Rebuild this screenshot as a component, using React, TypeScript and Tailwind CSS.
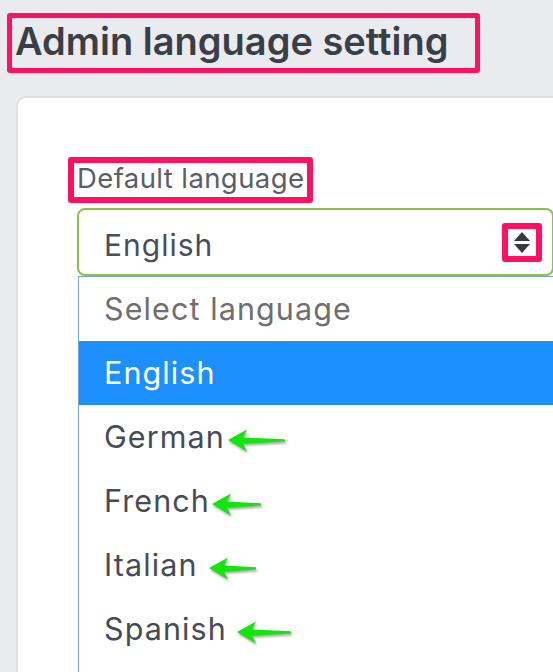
import React from "react";

function Arrow({ w }: { w: number }) {
  return (
    <svg
      width={w}
      height={26}
      viewBox={`0 0 ${w} 26`}
      className="drop-shadow-[1px_2px_1px_rgba(0,0,0,0.35)]"
    >
      <path
        d={`M1 12 L20 1.5 L16 9.5 L${w - 2} 11.3 L${w - 2} 13.5 L16 15.8 L20 23.5 Z`}
        fill="#11e60a"
      />
    </svg>
  );
}

const opts: { label: string; arrow: number; gap: number }[] = [
  { label: "German", arrow: 60, gap: 2 },
  { label: "French", arrow: 52, gap: 1 },
  { label: "Italian", arrow: 50, gap: 10 },
  { label: "Spanish", arrow: 57, gap: 9 },
];

export default function App() {
  return (
    <div
      className="h-[672px] w-[553px] overflow-hidden bg-[#eaebef]"
      style={{ fontFamily: "Inter, 'Noto Sans', sans-serif" }}
    >
      <div className="pl-[7px] pt-[13px]">
        <div className="flex h-[60px] w-[473px] items-center rounded-[3px] border-[5px] border-[#ff1160] pl-[3px]">
          <h1 className="-mt-[5px] text-[38px] leading-none font-semibold tracking-[0px] text-[#3a3e45]">
            Admin language setting
          </h1>
        </div>
      </div>

      <div className="ml-[16px] mt-[23px] h-[600px] w-[560px] rounded-tl-[10px] border-2 border-[#dfe0e3] bg-white pl-[50px] pt-[59px]">
        <div className="flex h-[46px] w-[245px] items-center rounded-[3px] border-[6px] border-[#ff1160] pl-[3px]">
          <span className="-mt-[3px] text-[27.5px] leading-none tracking-[0.4px] text-[#5a5e65]">
            Default language
          </span>
        </div>

        <div className="ml-[9px] mt-[5px] flex h-[68px] w-[477px] items-center justify-between rounded-[8px] border-2 border-[#8bc34a] pl-[25px] pr-[10px]">
          <span className="translate-y-[3px] text-[30px] leading-none tracking-[1px] text-[#4a4e56]">English</span>
          <div className="flex h-[39px] w-[40px] items-center justify-center rounded-[3px] border-[6px] border-[#ff1160]">
            <svg width="16" height="21" viewBox="0 0 16 21">
              <path d="M8 0 L16 9 L0 9 Z" fill="#353a42" />
              <path d="M0 12 L16 12 L8 21 Z" fill="#353a42" />
            </svg>
          </div>
        </div>

        <div className="ml-[10px] w-[480px] border-l border-t border-[#7aa0d8] bg-white">
          <div className="flex h-[64px] items-center pl-[25px] text-[30.5px] tracking-[1.1px] text-[#6f6f6f]">
            Select language
          </div>
          <div className="flex h-[64px] items-center bg-[#1e8fff] pl-[25px] text-[30.5px] tracking-[1.1px] text-white">
            English
          </div>
          {opts.map((o) => (
            <div
              key={o.label}
              className="flex h-[64px] items-center pl-[25px] text-[30.5px] tracking-[1.1px] text-[#474c54]"
            >
              <span>{o.label}</span>
              <span className="flex translate-y-[4px]" style={{ marginLeft: o.gap }}>
                <Arrow w={o.arrow} />
              </span>
            </div>
          ))}
          <div className="h-[64px]" />
        </div>
      </div>
    </div>
  );
}
